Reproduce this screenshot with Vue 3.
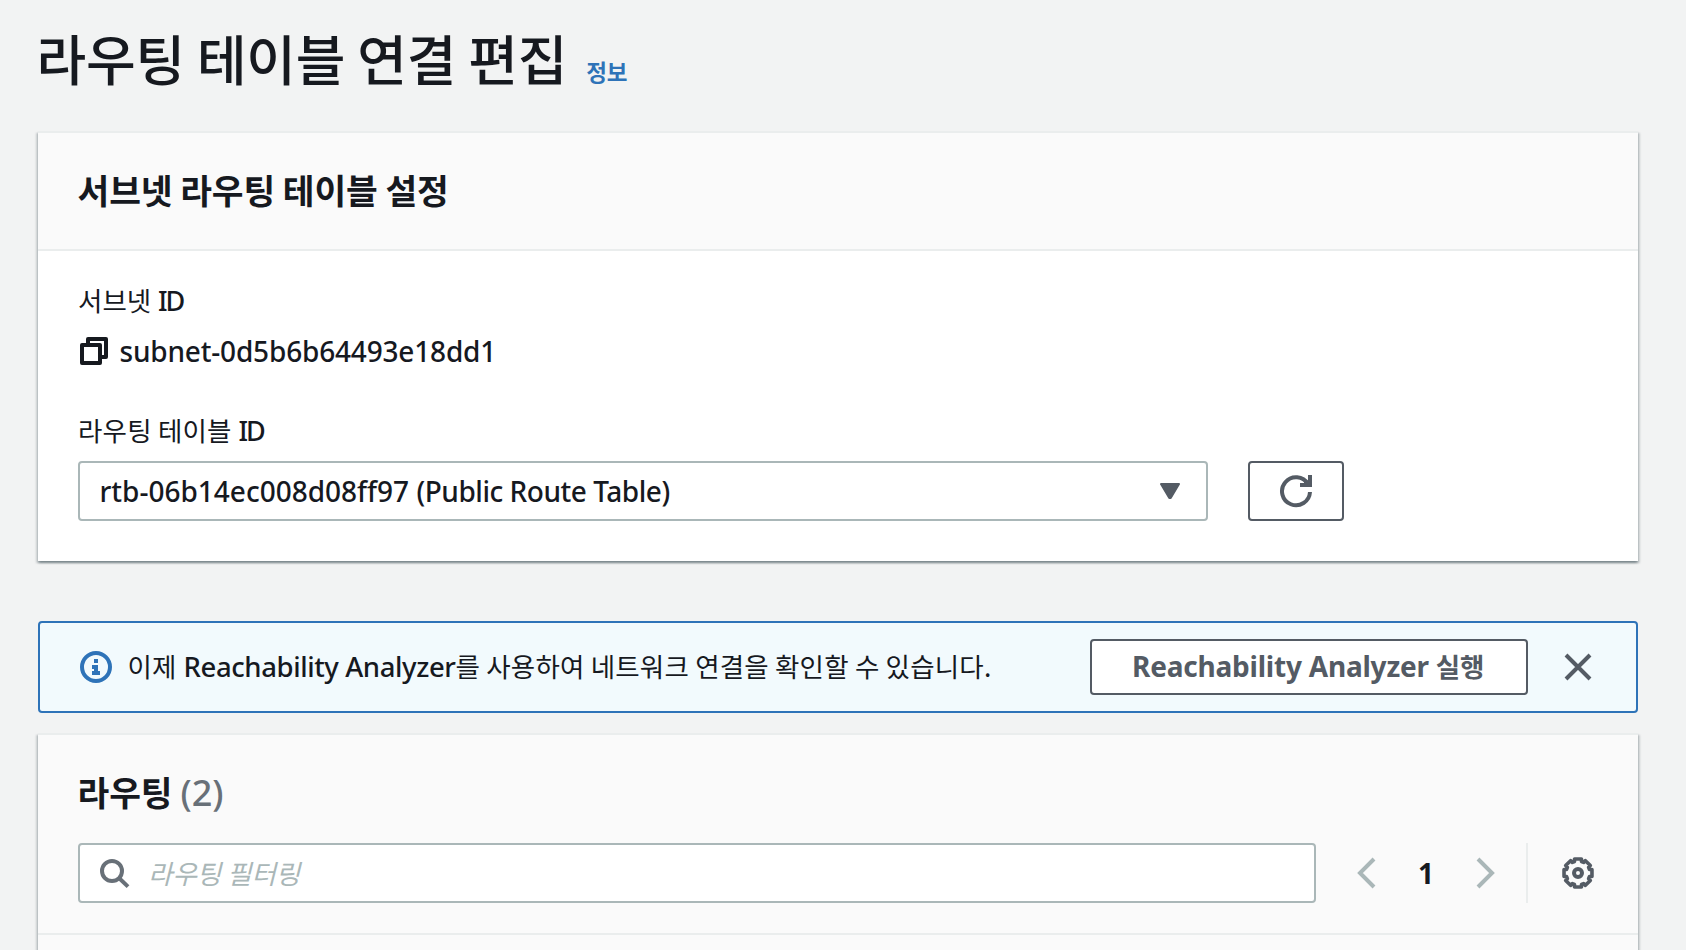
<script setup>
const gearPoints = Array.from({ length: 8 }, (_, i) => i * 45)
  .flatMap((a) => [[a - 14, 14.4], [a + 14, 14.4], [a + 17, 12], [a + 28, 12]])
  .map(([deg, r]) => {
    const t = (deg * Math.PI) / 180
    return `${(16 + r * Math.sin(t)).toFixed(2)},${(16 - r * Math.cos(t)).toFixed(2)}`
  })
  .join(' ')
</script>

<template>
  <main class="page">
    <header class="page-head">
      <h1>라우팅 테이블 연결 편집</h1>
      <a class="info-link">정보</a>
    </header>

    <section class="card settings">
      <div class="card-head">
        <h2>서브넷 라우팅 테이블 설정</h2>
      </div>
      <div class="card-body">
        <div class="label"><span class="ko">서브넷</span> <span class="id">ID</span></div>
        <div class="value">
          <svg class="copy" width="32" height="32" viewBox="0 0 32 32" fill="none" stroke="#16191f" stroke-width="4" stroke-linejoin="round">
            <path d="M10 10V4h18v18h-6" />
            <path d="M4 10h18v18H4z" />
          </svg>
          <span>subnet-0d5b6b64493e18dd1</span>
        </div>
        <div class="label second"><span class="ko wide">라우팅 테이블</span> <span class="id">ID</span></div>
        <div class="select-row">
          <div class="select">
            <span>rtb-06b14ec008d08ff97 <span class="name">(Public Route Table)</span></span>
            <svg width="20" height="16" viewBox="0 0 20 16" fill="#545b64" stroke="#545b64" stroke-width="2" stroke-linejoin="round">
              <path d="M1 1h18l-8.3 14h-1.4z" />
            </svg>
          </div>
          <button class="refresh">
            <svg width="34" height="34" viewBox="0 0 34 34" fill="none" stroke="#545b64" stroke-width="4">
              <path d="M31 18A14 14 0 1 1 29 10" />
              <path d="M31 1v10H21" />
              <path d="M25 9h5V6" stroke-width="3" />
            </svg>
          </button>
        </div>
      </div>
    </section>

    <section class="alert">
      <svg width="32" height="32" viewBox="0 0 32 32" fill="none">
        <circle cx="16" cy="16" r="14" stroke="#2e73b8" stroke-width="4" />
        <path d="M14 8h4v4h-4zM12 14h6v6h2v4h-8v-4h2v-2h-2z" fill="#2e73b8" />
      </svg>
      <p><span class="ko">이제</span> <span class="product">Reachability Analyzer</span><span class="ko sentence">를 사용하여 네트워크 연결을 확인할 수 있습니다.</span></p>
      <button class="run"><span>Reachability Analyzer <span class="ko">실행</span></span></button>
      <svg class="close" width="28" height="28" viewBox="0 0 28 28" fill="none" stroke="#545b64" stroke-width="4">
        <path d="M2 2l24 24M26 2L2 26" />
      </svg>
    </section>

    <section class="card routes">
      <div class="routes-head">
        <h2>라우팅<span class="count">(2)</span></h2>
        <div class="tools">
          <div class="search">
            <svg width="30" height="30" viewBox="0 0 30 30" fill="none" stroke="#687078" stroke-width="4">
              <circle cx="12" cy="12" r="10" />
              <path d="M19 19l9 8.6" />
            </svg>
            <span class="placeholder">라우팅 필터링</span>
          </div>
          <svg class="prev" width="20" height="32" viewBox="0 0 20 32" fill="none" stroke="#aab7b8" stroke-width="4">
            <path d="M18 2L4 16l14 14" />
          </svg>
          <span class="page-no">1</span>
          <svg width="20" height="32" viewBox="0 0 20 32" fill="none" stroke="#aab7b8" stroke-width="4">
            <path d="M2 2l14 14L2 30" />
          </svg>
          <i class="divider"></i>
          <svg class="gear" width="32" height="32" viewBox="0 0 32 32" fill="none" stroke="#545b64" stroke-width="4" stroke-linejoin="round">
            <polygon :points="gearPoints" stroke-width="3.6" />
            <circle cx="16" cy="16" r="4" />
          </svg>
        </div>
      </div>
    </section>
  </main>
</template>

<style>
body { background: #f2f3f3; }
</style>

<style scoped>
.page {
  box-sizing: border-box;
  width: 1686px;
  height: 950px;
  overflow: hidden;
  padding: 22px 48px 0 38px;
  background: #f2f3f3;
  color: #16191f;
  font: 500 28px/44px "Noto Sans", "Noto Sans CJK KR", sans-serif;
}
h1, h2, p { margin: 0; }
svg { display: block; flex: none; }
button {
  box-sizing: border-box;
  border: 2px solid #545b64;
  border-radius: 4px;
  background: #fff;
  color: #545b64;
  font: inherit;
  padding: 0;
}
.ko {
  font-family: "Noto Sans CJK KR", sans-serif;
  font-size: 26.5px;
  font-weight: 400;
  line-height: 0;
}
.ko.wide { letter-spacing: 0.2px; }
.ko.sentence { letter-spacing: 0.2px; }
.page-head {
  display: flex;
  align-items: baseline;
  height: 109px;
}
h1 {
  margin-left: -1.5px;
  font: 500 54px/72px "Noto Sans CJK KR", sans-serif;
  letter-spacing: -0.2px;
}
.info-link {
  margin-left: 19px;
  color: #2e73b8;
  font: 700 22.5px/30px "Noto Sans CJK KR", sans-serif;
}
.card {
  border-top: 2px solid #eaeded;
  background: #fff;
  box-shadow: 0 2px 2px 0 rgba(0, 28, 36, 0.3), 2px 2px 2px 0 rgba(0, 28, 36, 0.15), -2px 2px 2px 0 rgba(0, 28, 36, 0.15);
}
h2 {
  margin-left: -0.5px;
  font: 700 34.5px/44px "Noto Sans CJK KR", sans-serif;
  letter-spacing: -0.1px;
}
.card-head {
  height: 82px;
  padding: 34px 40px 0;
  border-bottom: 2px solid #eaeded;
  background: #fafafa;
}
.card-body { padding: 27px 40px 40px; }
.id {
  margin-left: -0.5px;
  font-size: 27px;
  line-height: 0;
  letter-spacing: -2px;
}
.value {
  display: flex;
  align-items: center;
  gap: 9.5px;
  margin: 7px 0 35px;
  letter-spacing: -0.18px;
}
.select-row {
  display: flex;
  gap: 40px;
  margin-top: 9px;
}
.select {
  display: flex;
  align-items: center;
  justify-content: space-between;
  box-sizing: border-box;
  width: 1130px;
  height: 60px;
  padding: 0 26px 0 19.5px;
  border: 2px solid #aab7b8;
  border-radius: 4px;
}
.name { letter-spacing: -0.46px; }
.refresh {
  display: flex;
  align-items: center;
  justify-content: center;
  width: 96px;
  height: 60px;
}
.alert {
  display: flex;
  align-items: center;
  box-sizing: border-box;
  height: 92px;
  margin-top: 60px;
  padding: 0 44.5px 0 40px;
  border: 2px solid #2e73b8;
  border-radius: 4px;
  background: #f2fafd;
}
.alert p {
  flex: 1;
  margin: -2px 0 0 15.5px;
  white-space: nowrap;
}
.product { font-size: 27.5px; letter-spacing: -0.4px; }
.run {
  width: 438px;
  height: 56px;
  padding: 0 0 2px 40.5px;
  font-weight: 700;
  line-height: 50px;
  letter-spacing: -0.21px;
  text-align: left;
  white-space: nowrap;
}
.run .ko { font-weight: 700; }
.close { margin-left: 36px; }
.routes { margin-top: 20px; height: 240px; background: #fafafa; }
.routes-head {
  padding: 34px 40px 30px;
  border-bottom: 2px solid #eaeded;
}
.count {
  margin-left: 8px;
  color: #687078;
  font: 500 36px/0 "Noto Sans", sans-serif;
  letter-spacing: 0;
}
.tools {
  display: flex;
  align-items: center;
  margin-top: 30px;
}
.search {
  display: flex;
  align-items: center;
  box-sizing: border-box;
  width: 1238px;
  height: 60px;
  padding-left: 20px;
  border: 2px solid #aab7b8;
  border-radius: 4px;
  background: #fff;
}
.search svg { margin-top: 2px; }
.placeholder {
  margin-left: 18px;
  color: #aab7b8;
  font: italic 400 26.5px/44px "Noto Sans CJK KR", sans-serif;
}
.prev { margin-left: 40px; }
.page-no {
  width: 100px;
  margin-top: -1px;
  font-weight: 700;
  text-align: center;
}
.divider {
  width: 2px;
  height: 60px;
  margin-left: 30px;
  background: #eaeded;
}
.gear { margin-left: 34px; }
</style>
